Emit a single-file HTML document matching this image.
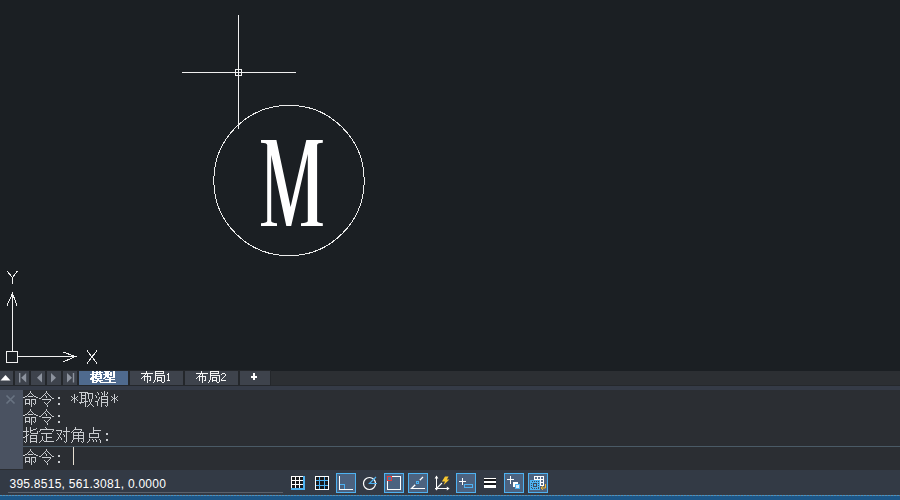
<!DOCTYPE html>
<html lang="zh"><head><meta charset="utf-8"><title>CAD</title>
<style>
html,body{margin:0;padding:0;background:#1b1f23;}
body{width:900px;height:500px;position:relative;overflow:hidden;font-family:"Liberation Sans",sans-serif;}
.abs,.px,.t{position:absolute;}
.px{display:block;overflow:visible;}
.t{color:transparent;white-space:pre;font-size:1px;line-height:1px;overflow:hidden;width:1px;height:1px;}
#canvas{left:0;top:0;width:900px;height:371px;background:#1b1f23;}
#tabrow{left:0;top:371px;width:900px;height:15px;background:#2c2f33;border-bottom:1px solid #25282c;box-sizing:border-box;}
.tb{position:absolute;top:0;height:14px;background:#3e434c;box-shadow:0 0 0 1px #24272b;}
.tb.act{background:#4f6a8e;}
#strip{left:0;top:386px;width:900px;height:4px;background:#353b47;}
#cmd{left:0;top:390px;width:900px;height:80px;background:#2b2e33;}
#gutter{left:0;top:0;width:23px;height:79px;background:#4a5261;}
#sep{left:23px;top:56px;width:877px;height:1px;background:#4a5a66;}
#caret{left:73px;top:57px;width:1px;height:18px;background:#e6dfd2;}
#status{left:0;top:470px;width:900px;height:25px;background:#333a45;}
#coords{left:9.5px;top:7px;font-size:12px;line-height:14px;color:#ffffff;white-space:pre;letter-spacing:0.25px;}
#uline{left:8px;top:22px;width:275px;height:1px;background:#5a616b;}
#bluebar{left:0;top:495px;width:900px;height:5px;background:#1c5687;}
#dots{left:0;top:495px;width:900px;height:1px;background:repeating-linear-gradient(90deg,#4b9ccf 0,#4b9ccf 2px,#7b7d80 2px,#7b7d80 3px);opacity:.85;}
.hl{position:absolute;top:3px;width:18px;height:18px;border:1px solid #4db2f2;background:#4c627f;}
</style></head><body>

<div id="canvas" class="abs"></div>
<svg class="px" style="left:0;top:0" width="900" height="370" viewBox="0 0 900 370">
<g shape-rendering="crispEdges" fill="#f0f0f0">
<rect x="238" y="15" width="1" height="114"/><rect x="182" y="72" width="114" height="1"/>
<rect x="235" y="69" width="7" height="1"/><rect x="235" y="75" width="7" height="1"/><rect x="235" y="69" width="1" height="7"/><rect x="241" y="69" width="1" height="7"/>
</g>
<circle cx="289" cy="180.5" r="75.2" fill="none" stroke="#ececec" stroke-width="1" shape-rendering="crispEdges"/>
<path fill="#ffffff" d="M261 140H276.4L290.6 207L306.3 140H322.8V142.8Q317.4 142.9 317.1 145V221Q317.4 223.1 322.8 223.2V226H301V223.2Q307.5 223.1 307.8 221V154L291.2 226H286.3L271.2 155V221Q271.5 223.1 277 223.2V226H261V223.2Q266.9 223.1 267.2 221V145Q266.9 142.9 261 142.8Z"/>
<g shape-rendering="crispEdges" fill="none" stroke="#f0f0f0" stroke-width="1">
<rect x="6.5" y="351.5" width="11" height="11"/>
<path d="M12.5 351V293.5M7 305.5L12.5 293.5L17 305.5"/>
<path d="M18 356.5H75.5M63 352L75.5 356.5L63 362"/>
<path d="M7 271L12.5 277.5L17.5 271M12.5 277.5V284"/>
<path d="M87 350.5L97 363.5M97 350.5L87 363.5"/>
</g>
</svg>
<div id="tabrow" class="abs">
<div class="tb" style="left:0px;width:13px"></div>
<div class="tb" style="left:15px;width:14px"></div>
<div class="tb" style="left:31px;width:14px"></div>
<div class="tb" style="left:47px;width:14px"></div>
<div class="tb" style="left:63px;width:14px"></div>
<div class="tb act" style="left:79px;width:49px"><span class="t">模型</span></div>
<div class="tb" style="left:130px;width:53px"><span class="t">布局1</span></div>
<div class="tb" style="left:185px;width:53px"><span class="t">布局2</span></div>
<div class="tb" style="left:240px;width:30px"><span class="t">+</span></div>
<svg class="px" style="left:0;top:0" width="80" height="15" viewBox="0 0 80 15">
<path fill="#ffffff" d="M0.5 9.5L5.5 4L10.5 9.5Z"/>
<g fill="#8d939e"><rect x="19" y="2" width="1.4" height="9.5"/><path d="M26.2 2V11.5L21.2 6.75Z"/><path d="M42 2V11.5L37 6.75Z"/><path d="M51 2V11.5L56 6.75Z"/><path d="M67 2V11.5L72 6.75Z"/><rect x="72.8" y="2" width="1.4" height="9.5"/></g>
</svg>
<svg class="px" style="left:90px;top:0px" width="26" height="12" viewBox="0 0 26 12" shape-rendering="crispEdges" role="img" aria-label="模型"><path fill="#ffffff" d="M2 0h2v1h-2zM6 0h2v1h-2zM9 0h2v1h-2zM14 0h6v1h-6zM23 0h2v1h-2zM2 1h11v1h-11zM15 1h4v1h-4zM20 1h2v1h-2zM23 1h2v1h-2zM2 2h2v1h-2zM6 2h2v1h-2zM9 2h2v1h-2zM15 2h4v1h-4zM20 2h2v1h-2zM23 2h2v1h-2zM0 3h12v1h-12zM13 3h9v1h-9zM23 3h2v1h-2zM2 4h2v1h-2zM5 4h2v1h-2zM10 4h2v1h-2zM15 4h4v1h-4zM20 4h2v1h-2zM23 4h2v1h-2zM2 5h10v1h-10zM15 5h4v1h-4zM23 5h2v1h-2zM1 6h6v1h-6zM10 6h2v1h-2zM14 6h2v1h-2zM17 6h8v1h-8zM0 7h4v1h-4zM5 7h7v1h-7zM13 7h2v1h-2zM19 7h2v1h-2zM0 8h4v1h-4zM7 8h2v1h-2zM15 8h10v1h-10zM2 9h11v1h-11zM19 9h2v1h-2zM2 10h2v1h-2zM6 10h2v1h-2zM9 10h2v1h-2zM19 10h2v1h-2zM2 11h5v1h-5zM10 11h16v1h-16z"/></svg>
<svg class="px" style="left:141px;top:0px" width="24" height="12" viewBox="0 0 24 12" shape-rendering="crispEdges" role="img" aria-label="布局"><path fill="#f4f4f4" d="M5 0h1v1h-1zM14 0h9v1h-9zM5 1h1v1h-1zM14 1h1v1h-1zM22 1h1v1h-1zM0 2h12v1h-12zM14 2h9v1h-9zM4 3h1v1h-1zM6 3h1v1h-1zM14 3h1v1h-1zM3 4h1v1h-1zM6 4h1v1h-1zM14 4h10v1h-10zM2 5h8v1h-8zM14 5h1v1h-1zM23 5h1v1h-1zM1 6h1v1h-1zM3 6h1v1h-1zM6 6h1v1h-1zM9 6h1v1h-1zM14 6h1v1h-1zM16 6h5v1h-5zM23 6h1v1h-1zM0 7h1v1h-1zM3 7h1v1h-1zM6 7h1v1h-1zM9 7h1v1h-1zM14 7h1v1h-1zM16 7h1v1h-1zM20 7h1v1h-1zM23 7h1v1h-1zM3 8h1v1h-1zM6 8h1v1h-1zM9 8h1v1h-1zM14 8h1v1h-1zM16 8h1v1h-1zM20 8h1v1h-1zM23 8h1v1h-1zM3 9h1v1h-1zM6 9h1v1h-1zM8 9h2v1h-2zM13 9h1v1h-1zM16 9h5v1h-5zM23 9h1v1h-1zM6 10h1v1h-1zM13 10h1v1h-1zM16 10h1v1h-1zM20 10h1v1h-1zM23 10h1v1h-1zM6 11h1v1h-1zM12 11h1v1h-1zM21 11h2v1h-2z"/></svg>
<svg class="px" style="left:167px;top:2px" width="3" height="8" viewBox="0 0 3 8" shape-rendering="crispEdges"><path fill="#f4f4f4" d="M1 0h1v1h-1zM0 1h1v1h-1zM1 1h1v1h-1zM1 2h1v1h-1zM1 3h1v1h-1zM1 4h1v1h-1zM1 5h1v1h-1zM1 6h1v1h-1zM0 7h1v1h-1zM1 7h1v1h-1zM2 7h1v1h-1z"/></svg>
<svg class="px" style="left:196px;top:0px" width="24" height="12" viewBox="0 0 24 12" shape-rendering="crispEdges" role="img" aria-label="布局"><path fill="#f4f4f4" d="M5 0h1v1h-1zM14 0h9v1h-9zM5 1h1v1h-1zM14 1h1v1h-1zM22 1h1v1h-1zM0 2h12v1h-12zM14 2h9v1h-9zM4 3h1v1h-1zM6 3h1v1h-1zM14 3h1v1h-1zM3 4h1v1h-1zM6 4h1v1h-1zM14 4h10v1h-10zM2 5h8v1h-8zM14 5h1v1h-1zM23 5h1v1h-1zM1 6h1v1h-1zM3 6h1v1h-1zM6 6h1v1h-1zM9 6h1v1h-1zM14 6h1v1h-1zM16 6h5v1h-5zM23 6h1v1h-1zM0 7h1v1h-1zM3 7h1v1h-1zM6 7h1v1h-1zM9 7h1v1h-1zM14 7h1v1h-1zM16 7h1v1h-1zM20 7h1v1h-1zM23 7h1v1h-1zM3 8h1v1h-1zM6 8h1v1h-1zM9 8h1v1h-1zM14 8h1v1h-1zM16 8h1v1h-1zM20 8h1v1h-1zM23 8h1v1h-1zM3 9h1v1h-1zM6 9h1v1h-1zM8 9h2v1h-2zM13 9h1v1h-1zM16 9h5v1h-5zM23 9h1v1h-1zM6 10h1v1h-1zM13 10h1v1h-1zM16 10h1v1h-1zM20 10h1v1h-1zM23 10h1v1h-1zM6 11h1v1h-1zM12 11h1v1h-1zM21 11h2v1h-2z"/></svg>
<svg class="px" style="left:221px;top:2px" width="5" height="8" viewBox="0 0 5 8" shape-rendering="crispEdges"><path fill="#f4f4f4" d="M1 0h1v1h-1zM2 0h1v1h-1zM3 0h1v1h-1zM0 1h1v1h-1zM4 1h1v1h-1zM4 2h1v1h-1zM3 3h1v1h-1zM2 4h1v1h-1zM1 5h1v1h-1zM0 6h1v1h-1zM0 7h1v1h-1zM1 7h1v1h-1zM2 7h1v1h-1zM3 7h1v1h-1zM4 7h1v1h-1z"/></svg>
<svg class="px" style="left:251px;top:2px" width="6" height="7" shape-rendering="crispEdges"><path fill="#fff" d="M2 0h2v3h2v2h-2v2h-2v-2h-2v-2h2z"/></svg>
</div>
<div id="strip" class="abs"></div>
<div id="cmd" class="abs"><div id="gutter" class="abs"></div>
<svg class="px" style="left:5px;top:4px" width="11" height="11" viewBox="0 0 11 11"><path d="M1.5 1.5L9.5 9.5M9.5 1.5L1.5 9.5" stroke="#687381" stroke-width="1.7" fill="none"/></svg>
<span class="t">命令: *取消*</span><span class="t">命令:</span><span class="t">指定对角点:</span><span class="t">命令:</span>
<svg class="px" style="left:23px;top:1px" width="95" height="16" viewBox="0 0 95 16" shape-rendering="crispEdges" role="img" aria-label="命令: *取消*"><path fill="#c9ccd0" d="M7 0h1v1h-1zM23 0h1v1h-1zM81 0h1v1h-1zM7 1h1v1h-1zM23 1h1v1h-1zM56 1h9v1h-9zM74 1h1v1h-1zM78 1h1v1h-1zM81 1h1v1h-1zM84 1h1v1h-1zM6 2h1v1h-1zM8 2h1v1h-1zM22 2h1v1h-1zM24 2h1v1h-1zM58 2h1v1h-1zM62 2h1v1h-1zM64 2h6v1h-6zM75 2h1v1h-1zM79 2h1v1h-1zM81 2h1v1h-1zM84 2h1v1h-1zM5 3h1v1h-1zM9 3h1v1h-1zM21 3h1v1h-1zM25 3h1v1h-1zM51 3h1v1h-1zM58 3h1v1h-1zM62 3h1v1h-1zM65 3h1v1h-1zM69 3h1v1h-1zM75 3h1v1h-1zM79 3h1v1h-1zM81 3h1v1h-1zM83 3h1v1h-1zM91 3h1v1h-1zM4 4h1v1h-1zM10 4h1v1h-1zM20 4h1v1h-1zM22 4h1v1h-1zM26 4h1v1h-1zM51 4h1v1h-1zM58 4h5v1h-5zM65 4h1v1h-1zM69 4h1v1h-1zM72 4h1v1h-1zM81 4h1v1h-1zM91 4h1v1h-1zM2 5h2v1h-2zM5 5h5v1h-5zM11 5h2v1h-2zM19 5h1v1h-1zM23 5h1v1h-1zM27 5h1v1h-1zM48 5h1v1h-1zM51 5h1v1h-1zM54 5h1v1h-1zM58 5h1v1h-1zM62 5h1v1h-1zM65 5h1v1h-1zM69 5h1v1h-1zM73 5h1v1h-1zM78 5h7v1h-7zM88 5h1v1h-1zM91 5h1v1h-1zM94 5h1v1h-1zM0 6h2v1h-2zM13 6h2v1h-2zM18 6h1v1h-1zM23 6h1v1h-1zM28 6h1v1h-1zM35 6h2v1h-2zM49 6h1v1h-1zM51 6h1v1h-1zM53 6h1v1h-1zM58 6h1v1h-1zM62 6h1v1h-1zM65 6h1v1h-1zM69 6h1v1h-1zM73 6h1v1h-1zM76 6h1v1h-1zM78 6h1v1h-1zM84 6h1v1h-1zM89 6h1v1h-1zM91 6h1v1h-1zM93 6h1v1h-1zM16 7h2v1h-2zM29 7h2v1h-2zM35 7h2v1h-2zM50 7h3v1h-3zM58 7h5v1h-5zM65 7h1v1h-1zM69 7h1v1h-1zM76 7h1v1h-1zM78 7h1v1h-1zM84 7h1v1h-1zM90 7h3v1h-3zM2 8h5v1h-5zM8 8h5v1h-5zM19 8h9v1h-9zM49 8h1v1h-1zM51 8h1v1h-1zM53 8h1v1h-1zM58 8h1v1h-1zM62 8h1v1h-1zM66 8h1v1h-1zM68 8h1v1h-1zM75 8h1v1h-1zM78 8h7v1h-7zM89 8h1v1h-1zM91 8h1v1h-1zM93 8h1v1h-1zM2 9h1v1h-1zM6 9h1v1h-1zM8 9h1v1h-1zM12 9h1v1h-1zM27 9h1v1h-1zM48 9h1v1h-1zM51 9h1v1h-1zM54 9h1v1h-1zM58 9h1v1h-1zM62 9h1v1h-1zM66 9h1v1h-1zM68 9h1v1h-1zM75 9h1v1h-1zM78 9h1v1h-1zM84 9h1v1h-1zM88 9h1v1h-1zM91 9h1v1h-1zM94 9h1v1h-1zM2 10h1v1h-1zM6 10h1v1h-1zM8 10h1v1h-1zM12 10h1v1h-1zM26 10h1v1h-1zM51 10h1v1h-1zM58 10h1v1h-1zM61 10h4v1h-4zM66 10h1v1h-1zM68 10h1v1h-1zM72 10h3v1h-3zM78 10h1v1h-1zM84 10h1v1h-1zM91 10h1v1h-1zM2 11h1v1h-1zM6 11h1v1h-1zM8 11h1v1h-1zM12 11h1v1h-1zM21 11h1v1h-1zM25 11h1v1h-1zM51 11h1v1h-1zM56 11h5v1h-5zM62 11h1v1h-1zM67 11h1v1h-1zM74 11h1v1h-1zM78 11h7v1h-7zM91 11h1v1h-1zM2 12h5v1h-5zM8 12h1v1h-1zM10 12h1v1h-1zM12 12h1v1h-1zM22 12h1v1h-1zM24 12h1v1h-1zM35 12h2v1h-2zM57 12h1v1h-1zM62 12h1v1h-1zM67 12h1v1h-1zM74 12h1v1h-1zM78 12h1v1h-1zM84 12h1v1h-1zM2 13h1v1h-1zM6 13h1v1h-1zM8 13h1v1h-1zM11 13h1v1h-1zM23 13h1v1h-1zM35 13h2v1h-2zM62 13h1v1h-1zM66 13h1v1h-1zM68 13h1v1h-1zM74 13h1v1h-1zM78 13h1v1h-1zM84 13h1v1h-1zM8 14h1v1h-1zM24 14h1v1h-1zM62 14h1v1h-1zM65 14h1v1h-1zM69 14h1v1h-1zM74 14h1v1h-1zM78 14h1v1h-1zM82 14h1v1h-1zM84 14h1v1h-1zM8 15h1v1h-1zM24 15h1v1h-1zM62 15h1v1h-1zM64 15h1v1h-1zM70 15h1v1h-1zM78 15h1v1h-1zM83 15h1v1h-1z"/></svg>
<svg class="px" style="left:23px;top:19px" width="37" height="16" viewBox="0 0 37 16" shape-rendering="crispEdges" role="img" aria-label="命令:"><path fill="#c9ccd0" d="M7 0h1v1h-1zM23 0h1v1h-1zM7 1h1v1h-1zM23 1h1v1h-1zM6 2h1v1h-1zM8 2h1v1h-1zM22 2h1v1h-1zM24 2h1v1h-1zM5 3h1v1h-1zM9 3h1v1h-1zM21 3h1v1h-1zM25 3h1v1h-1zM4 4h1v1h-1zM10 4h1v1h-1zM20 4h1v1h-1zM22 4h1v1h-1zM26 4h1v1h-1zM2 5h2v1h-2zM5 5h5v1h-5zM11 5h2v1h-2zM19 5h1v1h-1zM23 5h1v1h-1zM27 5h1v1h-1zM0 6h2v1h-2zM13 6h2v1h-2zM18 6h1v1h-1zM23 6h1v1h-1zM28 6h1v1h-1zM35 6h2v1h-2zM16 7h2v1h-2zM29 7h2v1h-2zM35 7h2v1h-2zM2 8h5v1h-5zM8 8h5v1h-5zM19 8h9v1h-9zM2 9h1v1h-1zM6 9h1v1h-1zM8 9h1v1h-1zM12 9h1v1h-1zM27 9h1v1h-1zM2 10h1v1h-1zM6 10h1v1h-1zM8 10h1v1h-1zM12 10h1v1h-1zM26 10h1v1h-1zM2 11h1v1h-1zM6 11h1v1h-1zM8 11h1v1h-1zM12 11h1v1h-1zM21 11h1v1h-1zM25 11h1v1h-1zM2 12h5v1h-5zM8 12h1v1h-1zM10 12h1v1h-1zM12 12h1v1h-1zM22 12h1v1h-1zM24 12h1v1h-1zM35 12h2v1h-2zM2 13h1v1h-1zM6 13h1v1h-1zM8 13h1v1h-1zM11 13h1v1h-1zM23 13h1v1h-1zM35 13h2v1h-2zM8 14h1v1h-1zM24 14h1v1h-1zM8 15h1v1h-1zM24 15h1v1h-1z"/></svg>
<svg class="px" style="left:23px;top:37px" width="85" height="16" viewBox="0 0 85 16" shape-rendering="crispEdges" role="img" aria-label="指定对角点:"><path fill="#c9ccd0" d="M3 0h1v1h-1zM7 0h1v1h-1zM22 0h1v1h-1zM43 0h1v1h-1zM52 0h1v1h-1zM70 0h1v1h-1zM3 1h1v1h-1zM7 1h1v1h-1zM13 1h1v1h-1zM23 1h1v1h-1zM43 1h1v1h-1zM52 1h1v1h-1zM70 1h1v1h-1zM3 2h1v1h-1zM7 2h1v1h-1zM10 2h3v1h-3zM17 2h14v1h-14zM43 2h1v1h-1zM51 2h8v1h-8zM70 2h1v1h-1zM3 3h1v1h-1zM7 3h3v1h-3zM17 3h1v1h-1zM30 3h1v1h-1zM33 3h6v1h-6zM43 3h1v1h-1zM50 3h1v1h-1zM58 3h1v1h-1zM70 3h8v1h-8zM0 4h6v1h-6zM7 4h1v1h-1zM14 4h1v1h-1zM16 4h1v1h-1zM29 4h1v1h-1zM38 4h1v1h-1zM40 4h7v1h-7zM49 4h1v1h-1zM57 4h1v1h-1zM70 4h1v1h-1zM3 5h1v1h-1zM7 5h1v1h-1zM14 5h1v1h-1zM38 5h1v1h-1zM43 5h1v1h-1zM48 5h1v1h-1zM50 5h11v1h-11zM70 5h1v1h-1zM3 6h1v1h-1zM8 6h7v1h-7zM18 6h11v1h-11zM34 6h1v1h-1zM37 6h1v1h-1zM43 6h1v1h-1zM50 6h1v1h-1zM55 6h1v1h-1zM60 6h1v1h-1zM66 6h10v1h-10zM83 6h2v1h-2zM3 7h1v1h-1zM5 7h1v1h-1zM23 7h1v1h-1zM35 7h1v1h-1zM37 7h1v1h-1zM40 7h1v1h-1zM43 7h1v1h-1zM50 7h1v1h-1zM55 7h1v1h-1zM60 7h1v1h-1zM66 7h1v1h-1zM75 7h1v1h-1zM83 7h2v1h-2zM3 8h2v1h-2zM7 8h7v1h-7zM23 8h1v1h-1zM36 8h1v1h-1zM41 8h1v1h-1zM43 8h1v1h-1zM50 8h11v1h-11zM66 8h1v1h-1zM75 8h1v1h-1zM2 9h2v1h-2zM7 9h1v1h-1zM13 9h1v1h-1zM19 9h1v1h-1zM23 9h1v1h-1zM36 9h1v1h-1zM41 9h1v1h-1zM43 9h1v1h-1zM50 9h1v1h-1zM55 9h1v1h-1zM60 9h1v1h-1zM66 9h1v1h-1zM75 9h1v1h-1zM0 10h2v1h-2zM3 10h1v1h-1zM7 10h1v1h-1zM13 10h1v1h-1zM19 10h1v1h-1zM23 10h6v1h-6zM35 10h1v1h-1zM37 10h1v1h-1zM43 10h1v1h-1zM50 10h1v1h-1zM55 10h1v1h-1zM60 10h1v1h-1zM66 10h10v1h-10zM3 11h1v1h-1zM7 11h7v1h-7zM19 11h1v1h-1zM23 11h1v1h-1zM35 11h1v1h-1zM38 11h1v1h-1zM43 11h1v1h-1zM50 11h11v1h-11zM3 12h1v1h-1zM7 12h1v1h-1zM13 12h1v1h-1zM19 12h1v1h-1zM23 12h1v1h-1zM34 12h1v1h-1zM38 12h1v1h-1zM43 12h1v1h-1zM50 12h1v1h-1zM55 12h1v1h-1zM60 12h1v1h-1zM66 12h1v1h-1zM69 12h1v1h-1zM72 12h1v1h-1zM76 12h1v1h-1zM83 12h2v1h-2zM3 13h1v1h-1zM7 13h1v1h-1zM13 13h1v1h-1zM18 13h1v1h-1zM20 13h1v1h-1zM23 13h1v1h-1zM33 13h1v1h-1zM43 13h1v1h-1zM49 13h1v1h-1zM55 13h1v1h-1zM60 13h1v1h-1zM66 13h1v1h-1zM70 13h1v1h-1zM73 13h1v1h-1zM77 13h1v1h-1zM83 13h2v1h-2zM1 14h1v1h-1zM3 14h1v1h-1zM7 14h7v1h-7zM17 14h1v1h-1zM21 14h10v1h-10zM41 14h1v1h-1zM43 14h1v1h-1zM49 14h1v1h-1zM55 14h1v1h-1zM58 14h1v1h-1zM60 14h1v1h-1zM65 14h1v1h-1zM70 14h1v1h-1zM73 14h1v1h-1zM77 14h1v1h-1zM2 15h1v1h-1zM7 15h1v1h-1zM13 15h1v1h-1zM16 15h1v1h-1zM42 15h1v1h-1zM48 15h1v1h-1zM59 15h1v1h-1zM64 15h1v1h-1zM77 15h1v1h-1z"/></svg>
<div id="sep" class="abs"></div>
<svg class="px" style="left:23px;top:59px" width="37" height="16" viewBox="0 0 37 16" shape-rendering="crispEdges" role="img" aria-label="命令:"><path fill="#c9ccd0" d="M7 0h1v1h-1zM23 0h1v1h-1zM7 1h1v1h-1zM23 1h1v1h-1zM6 2h1v1h-1zM8 2h1v1h-1zM22 2h1v1h-1zM24 2h1v1h-1zM5 3h1v1h-1zM9 3h1v1h-1zM21 3h1v1h-1zM25 3h1v1h-1zM4 4h1v1h-1zM10 4h1v1h-1zM20 4h1v1h-1zM22 4h1v1h-1zM26 4h1v1h-1zM2 5h2v1h-2zM5 5h5v1h-5zM11 5h2v1h-2zM19 5h1v1h-1zM23 5h1v1h-1zM27 5h1v1h-1zM0 6h2v1h-2zM13 6h2v1h-2zM18 6h1v1h-1zM23 6h1v1h-1zM28 6h1v1h-1zM35 6h2v1h-2zM16 7h2v1h-2zM29 7h2v1h-2zM35 7h2v1h-2zM2 8h5v1h-5zM8 8h5v1h-5zM19 8h9v1h-9zM2 9h1v1h-1zM6 9h1v1h-1zM8 9h1v1h-1zM12 9h1v1h-1zM27 9h1v1h-1zM2 10h1v1h-1zM6 10h1v1h-1zM8 10h1v1h-1zM12 10h1v1h-1zM26 10h1v1h-1zM2 11h1v1h-1zM6 11h1v1h-1zM8 11h1v1h-1zM12 11h1v1h-1zM21 11h1v1h-1zM25 11h1v1h-1zM2 12h5v1h-5zM8 12h1v1h-1zM10 12h1v1h-1zM12 12h1v1h-1zM22 12h1v1h-1zM24 12h1v1h-1zM35 12h2v1h-2zM2 13h1v1h-1zM6 13h1v1h-1zM8 13h1v1h-1zM11 13h1v1h-1zM23 13h1v1h-1zM35 13h2v1h-2zM8 14h1v1h-1zM24 14h1v1h-1zM8 15h1v1h-1zM24 15h1v1h-1z"/></svg>
<div id="caret" class="abs"></div>
</div>
<div id="status" class="abs">
<div id="coords" class="abs">395.8515, 561.3081, 0.0000</div><div id="uline" class="abs"></div>
<div class="hl" style="left:336px"></div>
<div class="hl" style="left:384px"></div>
<div class="hl" style="left:408px"></div>
<div class="hl" style="left:456px"></div>
<div class="hl" style="left:504px"></div>
<div class="hl" style="left:528px"></div>
<svg class="px" style="left:0;top:0" width="900" height="25" viewBox="0 470 900 25">
<g shape-rendering="crispEdges"><rect x="291" y="476" width="14" height="14" fill="#17191d"/><path fill="#ffffff" d="M291 476h12v1h-12zM291 480h12v1h-12zM291 484h12v1h-12zM291 476h1v12h-1zM295 476h1v12h-1zM299 476h1v12h-1z"/><path fill="#4db2f2" d="M303 476h2v14h-2zM291 488h14v2h-14z"/></g>
<g shape-rendering="crispEdges"><rect x="315" y="476" width="14" height="14" fill="#17191d"/><path fill="#4db2f2" d="M319 477h1v12h-1zM324 477h1v12h-1zM316 480h12v1h-12zM316 485h12v1h-12z"/><path fill="none" stroke="#ffffff" d="M315.5 476.5h13v13h-13z"/></g>
<g shape-rendering="crispEdges"><path fill="#4db2f2" d="M340 484h5v1h-5zM344 484h1v5h-1z"/><path fill="#ffffff" d="M339 476h1v14h-1zM339 489h14v1h-14z"/></g>
<circle cx="369.5" cy="483.5" r="6" fill="none" stroke="#ffffff" stroke-width="1.2"/><path d="M377 483.5H369.5L376 477" fill="none" stroke="#4db2f2" stroke-width="1.2"/>
<g shape-rendering="crispEdges"><path fill="none" stroke="#ffffff" d="M387.5 476.5h13v13h-13z"/><rect x="387.5" y="476.5" width="4" height="4" fill="#3f7da6" stroke="#ea3b3b"/></g>
<path d="M425 488.5H411.5L423 477" fill="none" stroke="#ffffff" stroke-width="1.2"/><g shape-rendering="crispEdges"><rect x="415" y="480" width="5" height="5" fill="#4c627f"/><rect x="416" y="481" width="3" height="3" fill="#4db2f2"/><rect x="417" y="482" width="1" height="1" fill="#4c627f"/></g>
<g shape-rendering="crispEdges" fill="#ffffff"><rect x="436" y="476" width="1" height="14"/><rect x="435" y="488" width="14" height="1"/></g><path d="M436.5 488.5L442 483" fill="none" stroke="#ffffff" stroke-width="1.1"/><path fill="#ffffff" d="M434.6 478.4L436.5 475.4L438.4 478.4ZM446.8 486.6L449.6 488.5L446.8 490.4ZM434.9 488.4L436.5 490.6L438.1 488.4Z"/><path fill="#f6c62f" d="M445 476.5H448.6L446.9 479.4H449.4L443.6 485L445 481.4H441.9Z"/>
<g shape-rendering="crispEdges"><path fill="#ffffff" d="M462 478h1v7h-1zM459 481h7v1h-7z"/><rect x="464.5" y="484.5" width="8" height="3" fill="#4c627f" stroke="#4db2f2"/></g>
<g shape-rendering="crispEdges"><rect x="484" y="478" width="12" height="10" fill="#15171b"/><path fill="#ffffff" d="M484 478h12v1h-12zM484 481h12v2h-12zM484 485h12v3h-12z"/></g>
<g shape-rendering="crispEdges"><path fill="#ffffff" d="M510 476h1v8h-1zM507 479h7v1h-7zM513 482h5v5h-5z"/><rect x="515.5" y="484.5" width="4" height="4" fill="#dfeaf5" stroke="#4db2f2"/></g>
<g shape-rendering="crispEdges"><rect x="534" y="476" width="10" height="10" fill="#ffffff"/><path fill="#5a6f8c" d="M535 477h2v2h-2zM538 477h2v2h-2zM541 477h2v2h-2zM541 480h2v2h-2zM541 483h2v2h-2z"/><rect x="530" y="480" width="10" height="10" fill="#4db2f2"/><rect x="531.5" y="481.5" width="7" height="7" fill="none" stroke="#3a4a60" stroke-dasharray="1 1"/><rect x="533.5" y="483.5" width="3" height="3" fill="#4db2f2" stroke="#3a4a60"/></g><path d="M545.5 484V488H541M543 486L541 488L543 490" fill="none" stroke="#f0b429" stroke-width="1"/>
</svg>
</div>
<div id="bluebar" class="abs"></div><div id="dots" class="abs"></div>
</body></html>
